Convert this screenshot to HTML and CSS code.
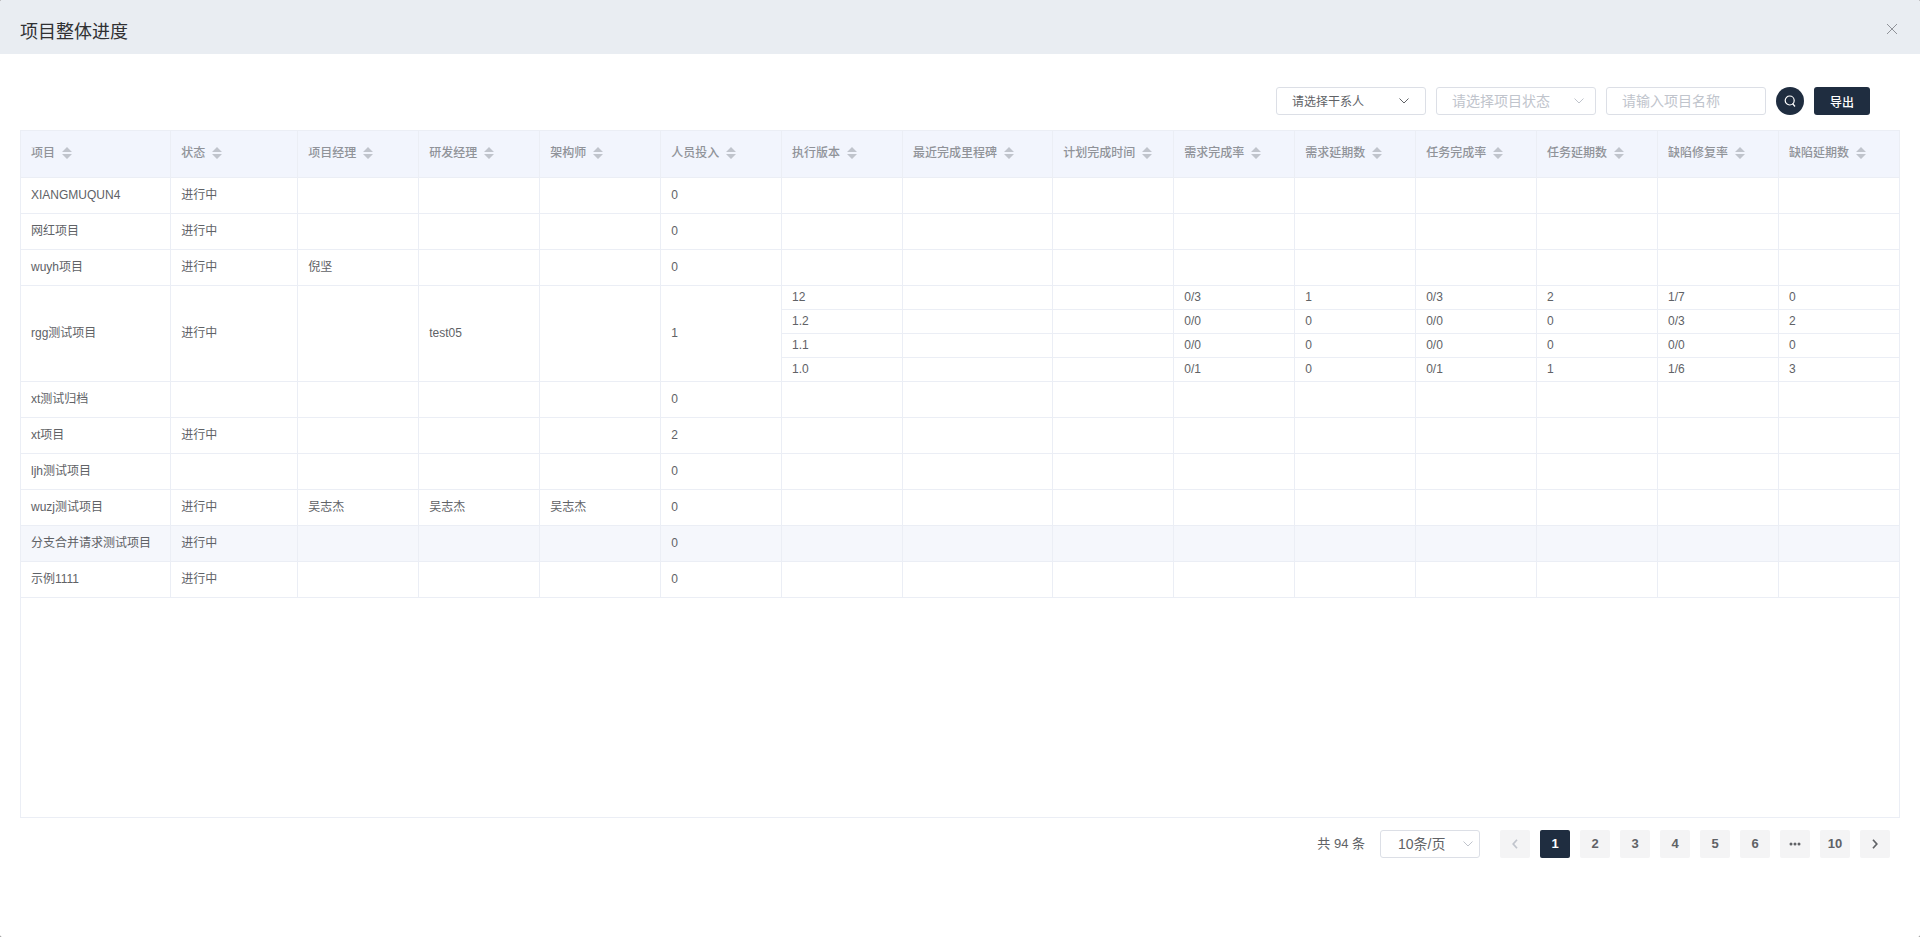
FILE: index.html
```html
<!DOCTYPE html>
<html lang="zh-CN">
<head>
<meta charset="utf-8">
<title>项目整体进度</title>
<link rel="stylesheet" href="styles.css">
</head>
<body>
<svg class="defs" aria-hidden="true">
  <symbol id="sort" viewBox="0 0 10 12"><path d="M5 0 10 5H0zM0 7h10l-5 5z"/></symbol>
  <symbol id="down" viewBox="0 0 10 6"><path d="M.5.5 5 5 9.500.5"/></symbol>
  <symbol id="left" viewBox="0 0 6 10"><path d="M5 .8 1.200 5 5 9.200"/></symbol>
  <symbol id="right" viewBox="0 0 6 10"><path d="M1 .8 4.800 5 1 9.200"/></symbol>
</svg>
<div class="dialog">
  <header class="dialog-header">
    <h1 class="dialog-title">项目整体进度</h1>
    <button class="close" type="button" aria-label="关闭"><svg viewBox="0 0 10 10"><path d="M0 0 10 10M10 0 0 10"/></svg></button>
  </header>
  <main class="dialog-body">
    <form class="toolbar">
      <div class="select select-person"><select aria-label="请选择干系人"><option>请选择干系人</option></select><svg class="arrow"><use href="#down"/></svg></div>
      <div class="select select-status"><select aria-label="请选择项目状态"><option>请选择项目状态</option></select><svg class="arrow"><use href="#down"/></svg></div>
      <input class="name-input" type="text" placeholder="请输入项目名称" aria-label="请输入项目名称">
      <button class="search" type="button" aria-label="搜索"><svg viewBox="0 0 12 12"><circle cx="5.700" cy="5.500" r="4.500"/><path d="M8.500 8.500 11 11.500"/></svg></button>
      <button class="export" type="button">导出</button>
    </form>
    <div class="table-wrap">
      <table class="table">
        <colgroup>
          <col class="col-wide"><col class="col-status"><col><col><col><col><col><col class="col-wide"><col><col><col><col><col><col><col>
        </colgroup>
        <thead>
          <tr>
            <th>项目<svg class="sort"><use href="#sort"/></svg></th>
            <th>状态<svg class="sort"><use href="#sort"/></svg></th>
            <th>项目经理<svg class="sort"><use href="#sort"/></svg></th>
            <th>研发经理<svg class="sort"><use href="#sort"/></svg></th>
            <th>架构师<svg class="sort"><use href="#sort"/></svg></th>
            <th>人员投入<svg class="sort"><use href="#sort"/></svg></th>
            <th>执行版本<svg class="sort"><use href="#sort"/></svg></th>
            <th>最近完成里程碑<svg class="sort"><use href="#sort"/></svg></th>
            <th>计划完成时间<svg class="sort"><use href="#sort"/></svg></th>
            <th>需求完成率<svg class="sort"><use href="#sort"/></svg></th>
            <th>需求延期数<svg class="sort"><use href="#sort"/></svg></th>
            <th>任务完成率<svg class="sort"><use href="#sort"/></svg></th>
            <th>任务延期数<svg class="sort"><use href="#sort"/></svg></th>
            <th>缺陷修复率<svg class="sort"><use href="#sort"/></svg></th>
            <th>缺陷延期数<svg class="sort"><use href="#sort"/></svg></th>
          </tr>
        </thead>
        <tbody>
          <tr><td>XIANGMUQUN4</td><td>进行中</td><td></td><td></td><td></td><td>0</td><td></td><td></td><td></td><td></td><td></td><td></td><td></td><td></td><td></td></tr>
          <tr><td>网红项目</td><td>进行中</td><td></td><td></td><td></td><td>0</td><td></td><td></td><td></td><td></td><td></td><td></td><td></td><td></td><td></td></tr>
          <tr><td>wuyh项目</td><td>进行中</td><td>倪坚</td><td></td><td></td><td>0</td><td></td><td></td><td></td><td></td><td></td><td></td><td></td><td></td><td></td></tr>
          <tr class="version"><td rowspan="4">rgg测试项目</td><td rowspan="4">进行中</td><td rowspan="4"></td><td rowspan="4">test05</td><td rowspan="4"></td><td rowspan="4">1</td><td>12</td><td></td><td></td><td>0/3</td><td>1</td><td>0/3</td><td>2</td><td>1/7</td><td>0</td></tr>
          <tr class="version"><td>1.2</td><td></td><td></td><td>0/0</td><td>0</td><td>0/0</td><td>0</td><td>0/3</td><td>2</td></tr>
          <tr class="version"><td>1.1</td><td></td><td></td><td>0/0</td><td>0</td><td>0/0</td><td>0</td><td>0/0</td><td>0</td></tr>
          <tr class="version"><td>1.0</td><td></td><td></td><td>0/1</td><td>0</td><td>0/1</td><td>1</td><td>1/6</td><td>3</td></tr>
          <tr><td>xt测试归档</td><td></td><td></td><td></td><td></td><td>0</td><td></td><td></td><td></td><td></td><td></td><td></td><td></td><td></td><td></td></tr>
          <tr><td>xt项目</td><td>进行中</td><td></td><td></td><td></td><td>2</td><td></td><td></td><td></td><td></td><td></td><td></td><td></td><td></td><td></td></tr>
          <tr><td>ljh测试项目</td><td></td><td></td><td></td><td></td><td>0</td><td></td><td></td><td></td><td></td><td></td><td></td><td></td><td></td><td></td></tr>
          <tr><td>wuzj测试项目</td><td>进行中</td><td>吴志杰</td><td>吴志杰</td><td>吴志杰</td><td>0</td><td></td><td></td><td></td><td></td><td></td><td></td><td></td><td></td><td></td></tr>
          <tr class="hover"><td>分支合并请求测试项目</td><td>进行中</td><td></td><td></td><td></td><td>0</td><td></td><td></td><td></td><td></td><td></td><td></td><td></td><td></td><td></td></tr>
          <tr><td>示例1111</td><td>进行中</td><td></td><td></td><td></td><td>0</td><td></td><td></td><td></td><td></td><td></td><td></td><td></td><td></td><td></td></tr>
        </tbody>
      </table>
    </div>
    <nav class="pagination" aria-label="分页">
      <span class="total">共 94 条</span>
      <div class="select select-size"><select aria-label="每页条数"><option>10条/页</option></select><svg class="arrow"><use href="#down"/></svg></div>
      <div class="pages">
        <button class="page" type="button" disabled aria-label="上一页"><svg class="chevron"><use href="#left"/></svg></button>
        <button class="page page-current" type="button" aria-current="page">1</button>
        <button class="page" type="button">2</button>
        <button class="page" type="button">3</button>
        <button class="page" type="button">4</button>
        <button class="page" type="button">5</button>
        <button class="page" type="button">6</button>
        <button class="page" type="button" aria-label="更多"><svg class="more" viewBox="0 0 12 4"><circle cx="2" cy="2" r="1.500"/><circle cx="6" cy="2" r="1.500"/><circle cx="10" cy="2" r="1.500"/></svg></button>
        <button class="page" type="button">10</button>
        <button class="page" type="button" aria-label="下一页"><svg class="chevron"><use href="#right"/></svg></button>
      </div>
    </nav>
  </main>
</div>
</body>
</html>
```
FILE: styles.css
```css
* { box-sizing: border-box; }

body {
  margin: 0;
  background: #7f7f7f;
  color: #606266;
  font: 12px/24px "Liberation Sans", "Noto Sans CJK SC", sans-serif;
}

button, input, select { margin: 0; font-family: inherit; }
button { padding: 0; border: 0; cursor: pointer; }
svg { display: block; }
.defs { position: absolute; width: 0; height: 0; }

.dialog {
  min-height: 100vh;
  overflow: hidden;
  border-radius: 2px;
  background: #fff;
}

.dialog-header {
  display: flex;
  align-items: center;
  justify-content: space-between;
  height: 54px;
  padding: 10px 20px 0;
  background: #e9edf2;
}
.dialog-title { margin: 0; color: #303133; font-size: 18px; font-weight: 400; line-height: 24px; }
.close { width: 16px; height: 16px; margin-bottom: 6px; background: none; }
.close svg { width: 10px; height: 10px; margin: auto; fill: none; stroke: #909399; }

.dialog-body { padding: 33px 20px; }

.toolbar {
  display: flex;
  align-items: center;
  justify-content: flex-end;
  gap: 10px;
  padding-right: 30px;
}
.select { position: relative; height: 28px; }
.select select, .name-input {
  width: 100%;
  height: 28px;
  padding: 0 15px;
  border: 1px solid #dcdfe6;
  border-radius: 3px;
  outline: 0;
  background: #fff;
  color: #606266;
  font-size: 14px;
  appearance: none;
}
.arrow {
  position: absolute;
  top: 11px;
  right: 12px;
  width: 10px;
  height: 6px;
  fill: none;
  stroke: #c0c4cc;
  pointer-events: none;
}
.select-person { width: 150px; }
.select-person select { padding-top: 2px; font-size: 12px; }
.select-person .arrow { right: 17px; stroke: #606266; }
.select-status { width: 160px; }
.select-status select { color: #c0c4cc; }
.name-input { width: 160px; }
.name-input::placeholder { color: #c0c4cc; }
.search { width: 28px; height: 28px; border-radius: 50%; background: #1f2d40; }
.search svg { width: 12px; height: 12px; margin: auto; fill: none; stroke: #fff; stroke-width: 1.2; }
.export {
  width: 56px;
  height: 28px;
  border-radius: 3px;
  background: #1f2d40;
  color: #fff;
  font-size: 12px;
  font-weight: 500;
}

.table-wrap {
  min-height: 688px;
  margin-top: 15px;
  border: 1px solid #ebeef5;
  border-right: 0;
  box-shadow: inset -1px 0 #ebeef5;
}
.table { width: 100%; border-spacing: 0; table-layout: fixed; }
.col-wide { width: 8%; }
.col-status { width: 127px; }
.table th, .table td {
  height: 36px;
  padding: 0 10px;
  border: solid #ebeef5;
  border-width: 0 1px 1px 0;
  line-height: 23px;
  text-align: left;
  white-space: nowrap;
}
.table th {
  height: 47px;
  padding-bottom: 2px;
  background: #f2f5fd;
  color: #909399;
  font-weight: 500;
}
.table .version td { height: 24px; }
.table .hover td { background: #f5f7fc; }
.sort {
  display: inline-block;
  width: 10px;
  height: 12px;
  margin-left: 7px;
  vertical-align: middle;
  fill: #c0c4cc;
}

.pagination {
  display: flex;
  align-items: center;
  justify-content: flex-end;
  padding: 12px 10px 0;
}
.total { margin-right: 15px; font-size: 13px; line-height: 28px; }
.select-size { width: 100px; margin-right: 20px; }
.select-size select { padding-left: 17px; }
.select-size .arrow { right: 7px; }
.pages { display: flex; gap: 10px; }
.page {
  width: 30px;
  height: 28px;
  padding-bottom: 1px;
  border-radius: 2px;
  background: #f4f4f5;
  color: #606266;
  font-size: 13px;
  font-weight: 700;
}
.page svg { margin: auto; }
.page-current { background: #1f2d40; color: #fff; }
.chevron { width: 6px; height: 10px; fill: none; stroke: #606266; stroke-width: 1.7; }
.page:disabled .chevron { stroke: #c0c4cc; }
.more { width: 12px; height: 4px; fill: #606266; }
```
